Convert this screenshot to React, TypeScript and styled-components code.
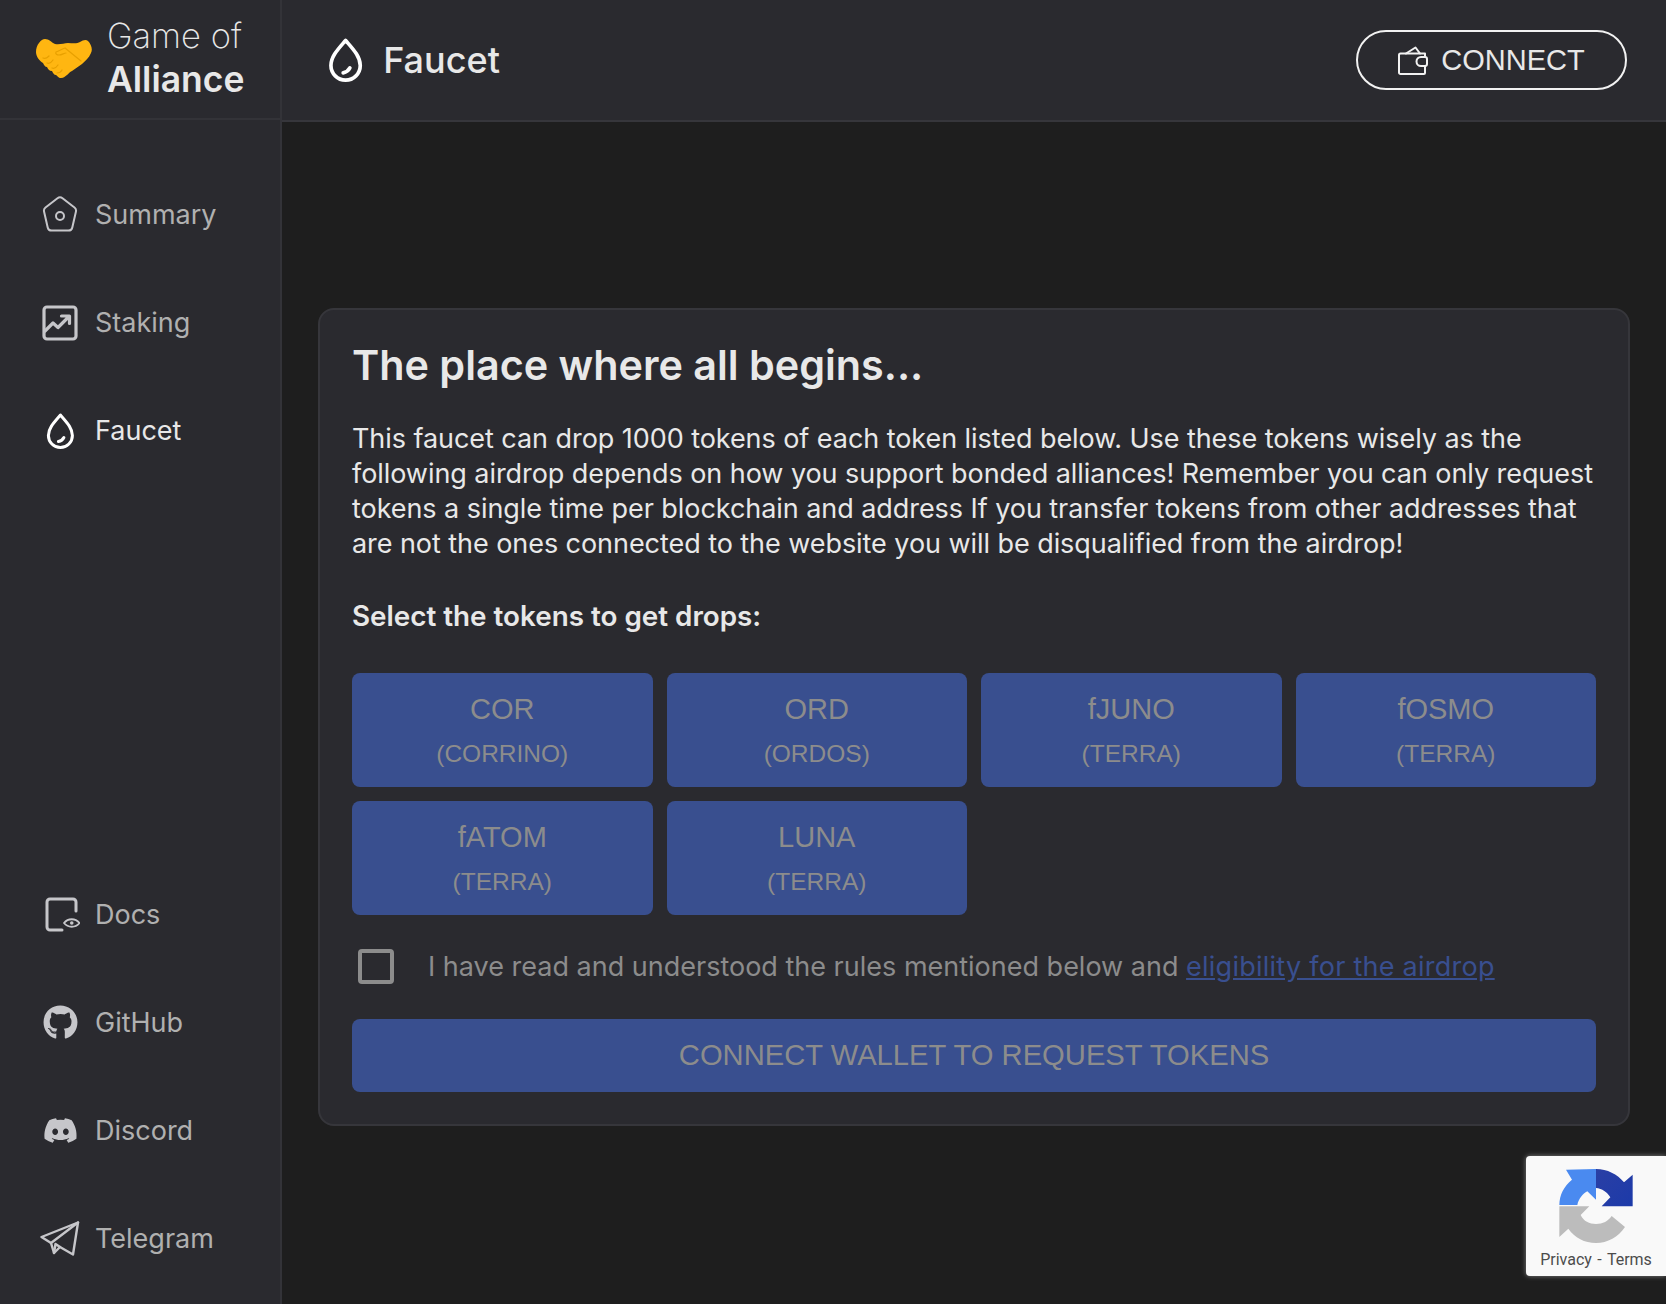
import React from "react";
import styled, { createGlobalStyle } from "styled-components";
import { FaGithub, FaDiscord } from "react-icons/fa";

const Global = createGlobalStyle`
  html, body { margin: 0; padding: 0; background: #1e1e1e; }
  * { box-sizing: border-box; }
  body { font-family: Inter, "Liberation Sans", sans-serif; color: #e8e8e8; }
`;

const Page = styled.div`
  display: grid;
  grid-template-columns: 282px 1fr;
  height: 1304px;
  overflow: hidden;
  position: relative;
`;
const Sidebar = styled.aside`
  display: flex;
  flex-direction: column;
  background: #2a2a2f;
  border-right: 2px solid #333338;
`;
const Brand = styled.div`
  height: 120px;
  flex: none;
  display: flex;
  align-items: center;
  gap: 15px;
  padding: 0 0 2px 36px;
  border-bottom: 2px solid #333338;
`;
const BrandMark = styled.svg`
  flex: none;
  margin-top: 2px;
`;
const BrandText = styled.div`
  display: flex;
  flex-direction: column;
`;
const BrandLight = styled.span`
  font-size: 34.500px;
  line-height: 44px;
  font-weight: 200;
  color: #e8e8e8;
`;
const BrandBold = styled.span`
  font-size: 35.500px;
  line-height: 44px;
  font-weight: 600;
  color: #e8e8e8;
`;
const Nav = styled.nav`
  flex: 1;
  display: flex;
  flex-direction: column;
  justify-content: space-between;
  padding: 40px 0 12px;
`;
const NavGroup = styled.div`
  display: flex;
  flex-direction: column;
`;
const NavItem = styled.a<{ $active?: boolean }>`
  height: 108px;
  display: flex;
  align-items: center;
  color: ${(p) => (p.$active ? "#e8e8e8" : "#b0b0b0")};
  font-size: 27px;
  text-decoration: none;
`;
const NavIcon = styled.span`
  width: 95px;
  flex: none;
  display: flex;
  justify-content: center;
  padding: 1px 0 0 25px;
  color: #c6c6ca;
`;
const Main = styled.main`
  display: flex;
  flex-direction: column;
  min-width: 0;
`;
const Header = styled.header`
  height: 122px;
  flex: none;
  display: flex;
  align-items: center;
  justify-content: space-between;
  padding: 0 39px 0 46px;
  background: #2a2a2f;
  border-bottom: 2px solid #36363b;
`;
const HeaderTitle = styled.h1`
  margin: 0;
  display: flex;
  align-items: center;
  gap: 20px;
  font-size: 36px;
  font-weight: 500;
  color: #e8e8e8;
`;
const ConnectButton = styled.button`
  width: 271px;
  height: 60px;
  display: flex;
  align-items: center;
  justify-content: center;
  gap: 13px;
  border: 2px solid #f2f2f2;
  border-radius: 30px;
  background: transparent;
  color: #e8e8e8;
  font-family: "Liberation Sans", Arial, sans-serif;
  font-size: 29px;
`;
const Content = styled.div`
  padding: 186px 36px 0 36px;
`;
const Card = styled.section`
  background: #2a2a2f;
  border: 2px solid #36363b;
  border-radius: 16px;
  padding: 31px 32px 32px 32px;
  display: flex;
  flex-direction: column;
`;
const Title = styled.h2`
  margin: 0;
  font-size: 41.300px;
  line-height: 48px;
  font-weight: 600;
  color: #e8e8e8;
`;
const Body = styled.p`
  margin: 32px 0 0;
  font-size: 27px;
  line-height: 35px;
  letter-spacing: -0.060px;
  color: #e8e8e8;
`;
const Label = styled.h3`
  margin: 38px 0 0;
  font-size: 27.800px;
  line-height: 34px;
  font-weight: 600;
  color: #e8e8e8;
`;
const TokenGrid = styled.div`
  margin-top: 40px;
  display: grid;
  grid-template-columns: repeat(4, 1fr);
  gap: 14px;
`;
const Token = styled.button`
  height: 114px;
  display: flex;
  flex-direction: column;
  align-items: center;
  justify-content: center;
  gap: 14px;
  padding: 0;
  border: 0;
  border-radius: 8px;
  background: #394f8f;
  color: #8c8c8c;
  font-family: "Liberation Sans", Arial, sans-serif;
`;
const TokenName = styled.span`
  font-size: 29px;
  line-height: 33px;
`;
const TokenChain = styled.span`
  font-size: 24.500px;
  line-height: 28px;
`;
const AgreeRow = styled.label`
  margin-top: 34px;
  padding-left: 6px;
  display: flex;
  align-items: center;
  gap: 34px;
  height: 35px;
  font-size: 27px;
  color: #8c8c8c;
`;
const Check = styled.span`
  width: 36px;
  height: 35px;
  flex: none;
  border: 4px solid #8c8c8c;
  border-radius: 4px;
`;
const AgreeLink = styled.a`
  color: #394f8f;
  letter-spacing: 0.250px;
  text-decoration: underline;
`;
const Submit = styled.button`
  margin-top: 35px;
  height: 73px;
  border: 0;
  border-radius: 8px;
  background: #394f8f;
  color: #8c8c8c;
  font-family: "Liberation Sans", Arial, sans-serif;
  font-size: 29.200px;
`;
const Recaptcha = styled.div`
  position: absolute;
  left: 1526px;
  top: 1156px;
  width: 140px;
  height: 120px;
  background: #f9f9f9;
  border-radius: 4px 0 0 4px;
  box-shadow: 0 0 5px #808080;
  display: flex;
  flex-direction: column;
  align-items: center;
  padding: 13px 0 0 0;
`;
const RecaptchaLinks = styled.div`
  font-family: Roboto, sans-serif;
  font-size: 16px;
  line-height: 20px;
  word-spacing: 1.500px;
  margin-top: 7px;
  color: #4c4c4c;
  white-space: nowrap;
`;

const Drop = ({ size = 36 }: { size?: number }) => (
  <svg width={size * 0.8} height={size} viewBox="0 0 28 36" fill="none" stroke="#fff" strokeWidth="3" strokeLinecap="round" strokeLinejoin="round">
    <path d="M14 2C20 9 26 15 26 22.500A12 12 0 0 1 2 22.500C2 15 8 9 14 2Z" />
    <path d="M12 28.500C14.500 28 16.500 26.500 17.500 24.500" />
  </svg>
);

const Handshake = () => (
  <BrandMark width="56" height="40" viewBox="0 0 56 40">
    <path fill="#ffb611" d="M0 13C0 6 5 0 9 0C13 0 15 3 19 5C24 6 28 4 32 4C36 4 41 5 44 3C47 1 50 0 52 2C55 5 57 10 55 14C53 19 49 22 46 25L36 32C33 33 33 35 31 36C29 37 28 39 25 39C22 39 22 37 20 36C18 36 17 34 16 32C13 32 12 30 11 28C9 28 8 26 7 24C4 22 0 18 0 13Z" />
    <path fill="none" stroke="#e8a000" strokeWidth="1.200" strokeLinecap="round" d="M45 22L29 9C26 10 23 12 20 13C19 15 21 16 23 16C26 16 28 14 30 14M7 19C9 20 11 19 13 17M11 24C13 25 15 24 17 21M16 29C18 30 20 29 22 26M21 34C23 34 25 33 26 31" />
  </BrandMark>
);

const House = () => (
  <svg width="36" height="37" viewBox="0 0 36 37" fill="none" stroke="currentColor" strokeWidth="2" strokeLinejoin="round">
    <path d="M15.500 2.300a4 4 0 0 1 5 0L32.500 11.500a4 4 0 0 1 1.400 4.200L30.300 31.500a4 4 0 0 1-3.900 3.100H9.600a4 4 0 0 1-3.900-3.100L2.100 15.700a4 4 0 0 1 1.400-4.200Z" />
    <circle cx="18" cy="20" r="4" />
  </svg>
);
const Chart = () => (
  <svg width="36" height="36" viewBox="0 0 36 36" fill="none" stroke="currentColor" strokeWidth="3.200" strokeLinecap="round" strokeLinejoin="round">
    <rect x="2" y="2" width="32" height="32" rx="3" />
    <path d="M3 26L11 18L16 22.500L27 11.500M19.500 11H27.500V18.500" />
  </svg>
);
const Docs = () => (
  <svg width="40" height="36" viewBox="0 0 40 36" fill="none" stroke="currentColor" strokeWidth="3" strokeLinecap="round" strokeLinejoin="round">
    <path d="M36 14V5a3 3 0 0 0-3-3H10a3 3 0 0 0-3 3V30a3 3 0 0 0 3 3H22" />
    <path strokeWidth="1.800" d="M24 26C28 21 35.500 21 39.500 26C35.500 31 28 31 24 26Z" />
    <circle cx="31.750" cy="26" r="1.800" fill="currentColor" strokeWidth="0" />
  </svg>
);
const Plane = () => (
  <svg width="40" height="35" viewBox="0 0 40 35" fill="none" stroke="currentColor" strokeWidth="2.400" strokeLinejoin="round" strokeLinecap="round">
    <path d="M1.500 16L38 1.500L33 33.500L20 26L14 32L11 22Z" />
    <path d="M38 1.500L11 22M14 32L15.500 23L20 26" />
  </svg>
);
const Wallet = () => (
  <svg width="30" height="29" viewBox="0 0 30 29" fill="none" stroke="#f2f2f2" strokeWidth="2" strokeLinejoin="round" strokeLinecap="round">
    <path d="M27 11V7.500H2.500a1.500 1.500 0 0 0-1.500 1.500V26.500a1.500 1.500 0 0 0 1.500 1.500H26a1 1 0 0 0 1-1V20" />
    <path d="M8 7.500L17.500 1.500L22 7.500" />
    <path d="M27 11H23a4.500 4.500 0 0 0 0 9H27a2 2 0 0 0 2-2V13a2 2 0 0 0-2-2Z" />
  </svg>
);
const RecaptchaLogo = () => (
  <svg width="74" height="74" viewBox="178 88 220 222">
    <defs>
      <linearGradient id="dk" x1="0" y1="0" x2="1" y2="1">
        <stop offset="0" stopColor="#2a3fa5" />
        <stop offset="1" stopColor="#1c3aa9" />
      </linearGradient>
    </defs>
    <path fill="#4a8af0" d="M178 196C178 166 192 139 216 120L198 90L288 88V180L262 155C248 163 236 177 232 196Z" />
    <path fill="url(#dk)" d="M288 88C322 88 352 104 372 128L398 105V200H305L331 173C322 158 306 146 288 145Z" />
    <path fill="#bcbcbc" d="M178 200H268L242 226C251 245 268 253 288 253C308 253 325 244 335 229L375 262C355 292 323 310 288 310C254 310 224 294 205 267L178 292Z" />
  </svg>
);

const topNav = [
  { label: "Summary", icon: <House /> },
  { label: "Staking", icon: <Chart /> },
  { label: "Faucet", icon: <Drop />, active: true },
];
const bottomNav = [
  { label: "Docs", icon: <Docs /> },
  { label: "GitHub", icon: <FaGithub size={35} /> },
  { label: "Discord", icon: <FaDiscord size={35} /> },
  { label: "Telegram", icon: <Plane /> },
];
const tokens = [
  ["COR", "(CORRINO)"],
  ["ORD", "(ORDOS)"],
  ["fJUNO", "(TERRA)"],
  ["fOSMO", "(TERRA)"],
  ["fATOM", "(TERRA)"],
  ["LUNA", "(TERRA)"],
];

export default function App() {
  return (
    <Page>
      <Global />
      <Sidebar>
        <Brand>
          <Handshake />
          <BrandText>
            <BrandLight>Game of</BrandLight>
            <BrandBold>Alliance</BrandBold>
          </BrandText>
        </Brand>
        <Nav>
          <NavGroup>
            {topNav.map((n) => (
              <NavItem key={n.label} $active={n.active}>
                <NavIcon>{n.icon}</NavIcon>
                {n.label}
              </NavItem>
            ))}
          </NavGroup>
          <NavGroup>
            {bottomNav.map((n) => (
              <NavItem key={n.label}>
                <NavIcon>{n.icon}</NavIcon>
                {n.label}
              </NavItem>
            ))}
          </NavGroup>
        </Nav>
      </Sidebar>
      <Main>
        <Header>
          <HeaderTitle>
            <Drop size={44} />
            Faucet
          </HeaderTitle>
          <ConnectButton>
            <Wallet />
            CONNECT
          </ConnectButton>
        </Header>
        <Content>
          <Card>
            <Title>The place where all begins...</Title>
            <Body>
              This faucet can drop 1000 tokens of each token listed below. Use these tokens wisely as the following airdrop depends on how you support bonded alliances! Remember you can only request tokens a single time per blockchain and address If you transfer tokens from other addresses that are not the ones connected to the website you will be disqualified from the airdrop!
            </Body>
            <Label>Select the tokens to get drops:</Label>
            <TokenGrid>
              {tokens.map(([name, chain]) => (
                <Token key={name}>
                  <TokenName>{name}</TokenName>
                  <TokenChain>{chain}</TokenChain>
                </Token>
              ))}
            </TokenGrid>
            <AgreeRow>
              <Check />
              <span>
                I have read and understood the rules mentioned below and <AgreeLink>eligibility for the airdrop</AgreeLink>
              </span>
            </AgreeRow>
            <Submit>CONNECT WALLET TO REQUEST TOKENS</Submit>
          </Card>
        </Content>
      </Main>
      <Recaptcha>
        <RecaptchaLogo />
        <RecaptchaLinks>Privacy - Terms</RecaptchaLinks>
      </Recaptcha>
    </Page>
  );
}
